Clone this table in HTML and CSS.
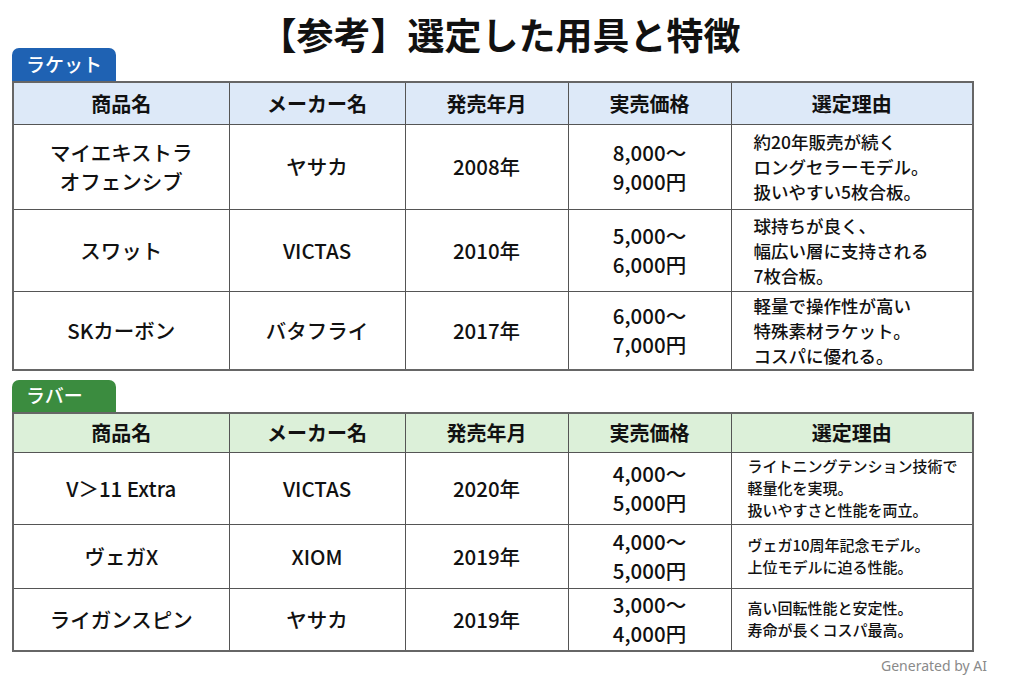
FILE: index.html
```html
<!DOCTYPE html>
<html lang="ja">
<head>
<meta charset="utf-8">
<link rel="stylesheet" href="styles.css">
</head>
<body>
<div class="page">
  <h1 class="title">【参考】選定した用具と特徴</h1>

  <section class="group blue">
    <div class="tab">ラケット</div>
    <table class="tbl">
      <colgroup><col class="c1"><col class="c2"><col class="c3"><col class="c4"><col class="c5"></colgroup>
      <thead>
        <tr><th>商品名</th><th>メーカー名</th><th>発売年月</th><th>実売価格</th><th>選定理由</th></tr>
      </thead>
      <tbody>
        <tr class="r1">
          <td>マイエキストラ<br>オフェンシブ</td><td>ヤサカ</td><td>2008年</td><td>8,000～<br>9,000円</td>
          <td class="reason">約20年販売が続く<br>ロングセラーモデル。<br>扱いやすい5枚合板。</td>
        </tr>
        <tr class="r2">
          <td>スワット</td><td>VICTAS</td><td>2010年</td><td>5,000～<br>6,000円</td>
          <td class="reason">球持ちが良く、<br>幅広い層に支持される<br>7枚合板。</td>
        </tr>
        <tr class="r3">
          <td>SKカーボン</td><td>バタフライ</td><td>2017年</td><td>6,000～<br>7,000円</td>
          <td class="reason">軽量で操作性が高い<br>特殊素材ラケット。<br>コスパに優れる。</td>
        </tr>
      </tbody>
    </table>
  </section>

  <section class="group green">
    <div class="tab">ラバー</div>
    <table class="tbl">
      <colgroup><col class="c1"><col class="c2"><col class="c3"><col class="c4"><col class="c5"></colgroup>
      <thead>
        <tr><th>商品名</th><th>メーカー名</th><th>発売年月</th><th>実売価格</th><th>選定理由</th></tr>
      </thead>
      <tbody>
        <tr class="r1">
          <td>V＞11 Extra</td><td>VICTAS</td><td>2020年</td><td>4,000～<br>5,000円</td>
          <td class="reason">ライトニングテンション技術で<br>軽量化を実現。<br>扱いやすさと性能を両立。</td>
        </tr>
        <tr class="r2">
          <td>ヴェガX</td><td>XIOM</td><td>2019年</td><td>4,000～<br>5,000円</td>
          <td class="reason">ヴェガ10周年記念モデル。<br>上位モデルに迫る性能。</td>
        </tr>
        <tr class="r3">
          <td>ライガンスピン</td><td>ヤサカ</td><td>2019年</td><td>3,000～<br>4,000円</td>
          <td class="reason">高い回転性能と安定性。<br>寿命が長くコスパ最高。</td>
        </tr>
      </tbody>
    </table>
  </section>

  <div class="credit">Generated by AI</div>
</div>
</body>
</html>
```

FILE: styles.css
```css
* { box-sizing: border-box; }
html, body { margin: 0; padding: 0; background: #ffffff; }
body {
  font-family: "Noto Sans CJK JP", "Noto Sans", sans-serif;
  color: #111;
  width: 1024px;
  height: 682px;
  overflow: hidden;
}
.page {
  padding: 0 52px 0 12px;
  position: relative;
  height: 682px;
}
.title {
  margin: 0;
  height: 48px;
  padding-top: 10px;
  line-height: 48px;
  font-size: 37px;
  font-weight: 700;
  text-align: center;
  width: 976px;
}
.group { width: 960px; }
.group.green { margin-top: 9px; }
.tab {
  width: 104px;
  height: 33px;
  border-radius: 7px 7px 0 0;
  color: #fff;
  font-size: 19px;
  font-weight: 500;
  line-height: 32px;
  padding-left: 14px;
}
.green .tab { height: 32px; line-height: 30px; }
.blue .tab { background: #1f62b3; }
.green .tab { background: #3b8c3f; }
.tbl {
  width: 960px;
  table-layout: fixed;
  border-collapse: collapse;
  border: 2px solid #666;
}
.c1 { width: 216px; }
.c2 { width: 176px; }
.c3 { width: 163px; }
.c4 { width: 163px; }
.c5 { width: 242px; }
.tbl th, .tbl td {
  border: 1px solid #555;
  text-align: center;
  vertical-align: middle;
  padding: 0;
}
.tbl th {
  font-size: 20px;
  font-weight: 700;
  height: 42px;
}
.blue th { background: #dde9f8; }
.green th { background: #dcf0d9; height: 39px; }
.tbl td {
  font-size: 20.5px;
  font-weight: 500;
  line-height: 29px;
}
.blue .r1 td { height: 85px; }
.blue .r2 td { height: 82px; }
.blue .r3 td { height: 79px; }
.green .r1 td { height: 72px; }
.green .r2 td { height: 64px; }
.green .r3 td { height: 63px; }
.tbl td.reason {
  text-align: left;
  font-size: 17.5px;
  line-height: 25px;
  font-weight: 500;
  padding-left: 22px;
}
.green td.reason {
  font-size: 15px;
  line-height: 22px;
  padding-left: 16px;
}
.credit {
  position: absolute;
  right: 37px;
  top: 656px;
  font-family: "Noto Sans", sans-serif;
  font-size: 14px;
  color: #8a8a8a;
}
```
